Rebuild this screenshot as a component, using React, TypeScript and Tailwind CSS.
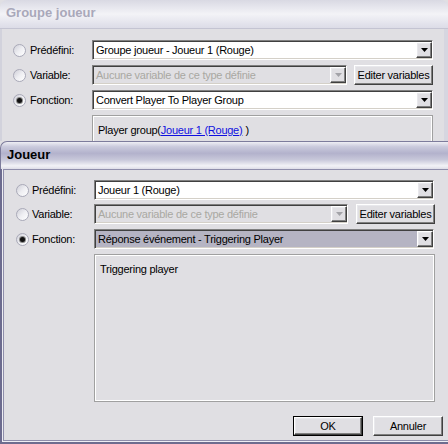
import React from 'react';

const sunken =
  'border-[1px] border-t-[#808080] border-l-[#808080] border-b-white border-r-white shadow-[inset_1px_1px_0_#404040,inset_-1px_-1px_0_#d4d0c8]';
const raised =
  'border-[1px] border-t-white border-l-white border-b-[#404040] border-r-[#404040] shadow-[inset_-1px_-1px_0_#808080,inset_1px_1px_0_#e8e8ec]';

const Radio: React.FC<{ checked?: boolean }> = ({ checked }) => (
  <div className="w-[13px] h-[13px] shrink-0 rounded-full border border-[#a9a9b8] bg-linear-to-br from-[#cfcfd8] via-[#eeeef2] to-white flex items-center justify-center">
    {checked && <div className="w-[5px] h-[5px] rounded-full bg-[#111] shadow-[0_0_0_1px_#888]" />}
  </div>
);

const Arrow: React.FC<{ disabled?: boolean }> = ({ disabled }) => (
  <div className={`w-[16px] h-[16px] shrink-0 bg-[#e0dfe3] flex items-center justify-center ${raised}`}>
    <svg width="7" height="4" viewBox="0 0 7 4">
      <polygon points="0,0 7,0 3.5,4" fill={disabled ? '#a3a3a8' : '#000'} />
    </svg>
  </div>
);

interface ComboProps {
  text: string;
  width: string;
  disabled?: boolean;
  selected?: boolean;
}

const Combo: React.FC<ComboProps> = ({ text, width, disabled, selected }) => (
  <div
    className={`${width} h-[20px] shrink-0 flex items-center ${sunken} ${
      disabled ? 'bg-[#e0dfe3] text-[#a9a8a2]' : selected ? 'bg-[#b5b4c3] text-black' : 'bg-white text-black'
    }`}
  >
    <span className="flex-1 pl-[3px] whitespace-nowrap overflow-hidden">{text}</span>
    <Arrow disabled={disabled} />
  </div>
);

const Button: React.FC<{ label: string; width: string; def?: boolean }> = ({ label, width, def }) => (
  <div className={`${width} h-[20px] shrink-0 ${def ? 'border border-black' : ''}`}>
    <div className={`w-full h-full bg-[#e0dfe3] flex items-center justify-center text-black ${raised}`}>{label}</div>
  </div>
);

interface RowProps {
  label: string;
  checked?: boolean;
  gapClass: string;
  children: React.ReactNode;
}

const Row: React.FC<RowProps> = ({ label, checked, gapClass, children }) => (
  <div className="flex items-center h-[20px]">
    <Radio checked={checked} />
    <span className={`${gapClass} w-[62px] shrink-0 text-black`}>{label}</span>
    {children}
  </div>
);

export default function App() {
  return (
    <div className="w-[448px] h-[444px] overflow-hidden bg-[#e0dfe3] font-['Liberation_Sans',Arial,sans-serif] text-[11px] tracking-[-0.25px]">
      {/* back window: Groupe joueur */}
      <div className="h-[141px] overflow-hidden flex flex-col">
        <div className="h-[29px] shrink-0 rounded-t-[7px] border-b border-[#c4c4d2] bg-linear-to-b from-[#d9d9e3] via-[#f3f3f7] to-[#dcdce7] flex items-center pl-[6px] pb-[2px] text-[13px] font-bold tracking-normal text-[#a9a8ba]">
          Groupe joueur
        </div>
        <div className="flex-1 border-l-[2px] border-r-[4px] border-l-[#d2d2dc] border-r-[#d6d6e0] pl-[11px] pt-[11px] flex flex-col">
          <Row label="Prédéfini:" gapClass="ml-[4px]">
            <Combo text="Groupe joueur - Joueur 1 (Rouge)" width="w-[341px]" />
          </Row>
          <div className="mt-[5px]">
            <Row label="Variable:" gapClass="ml-[4px]">
              <Combo text="Aucune variable de ce type définie" width="w-[255px]" disabled />
              <div className="ml-[7px]">
                <Button label="Editer variables" width="w-[79px]" />
              </div>
            </Row>
          </div>
          <div className="mt-[5px]">
            <Row label="Fonction:" gapClass="ml-[4px]" checked>
              <Combo text="Convert Player To Player Group" width="w-[341px]" />
            </Row>
          </div>
          <div className="mt-[5px] ml-[79px] w-[341px] h-[60px] shrink-0 border border-[#a0a0a0] shadow-[inset_1px_1px_0_#fff,inset_-1px_-1px_0_#fff] pl-[5px] pt-[6px] text-black whitespace-nowrap">
            Player group(
            <span className="text-[#1010e0] underline">Joueur 1 (Rouge)</span>
            <span className="ml-[3px]">)</span>
          </div>
        </div>
      </div>

      {/* front window: Joueur */}
      <div className="h-[303px] flex flex-col">
        <div className="h-[28px] shrink-0 rounded-tl-[7px] border-t border-l border-[#7d7c9c] bg-[linear-gradient(to_bottom,#eeeef4_0%,#c9c9dc_18%,#b3b2cc_42%,#c8c8da_66%,#f2f2f6_88%,#dedde7_100%)] flex items-center pl-[6px] pb-[1px] text-[13px] font-bold tracking-normal text-black">
          Joueur
        </div>
        <div className="flex-1 flex flex-col border-l-[2px] border-b-[2px] border-[#6d6c8f]">
          <div className="flex-1 flex flex-col border-l-[1px] border-b-[1px] border-[#eeeef4]">
            <div className="flex-1 flex flex-col border-l-[1px] border-t-[1px] border-b-[1px] border-[#8f8eab] pl-[12px] pt-[10px] pr-[5px]">
              <Row label="Prédéfini:" gapClass="ml-[3px]">
                <Combo text="Joueur 1 (Rouge)" width="w-[340px]" />
              </Row>
              <div className="mt-[4px]">
                <Row label="Variable:" gapClass="ml-[3px]">
                  <Combo text="Aucune variable de ce type définie" width="w-[254px]" disabled />
                  <div className="ml-[8px]">
                    <Button label="Editer variables" width="w-[79px]" />
                  </div>
                </Row>
              </div>
              <div className="mt-[5px]">
                <Row label="Fonction:" gapClass="ml-[3px]" checked>
                  <Combo text="Réponse événement - Triggering Player" width="w-[340px]" selected />
                </Row>
              </div>
              <div className="mt-[5px] ml-[78px] w-[341px] h-[148px] shrink-0 border border-[#a0a0a0] shadow-[inset_1px_1px_0_#fff,inset_-1px_-1px_0_#fff] pl-[5px] pt-[6px] text-black">
                Triggering player
              </div>
              <div className="mt-[14px] flex justify-end gap-[10px]">
                <Button label="OK" width="w-[70px]" def />
                <Button label="Annuler" width="w-[70px]" />
              </div>
            </div>
          </div>
        </div>
      </div>
    </div>
  );
}
